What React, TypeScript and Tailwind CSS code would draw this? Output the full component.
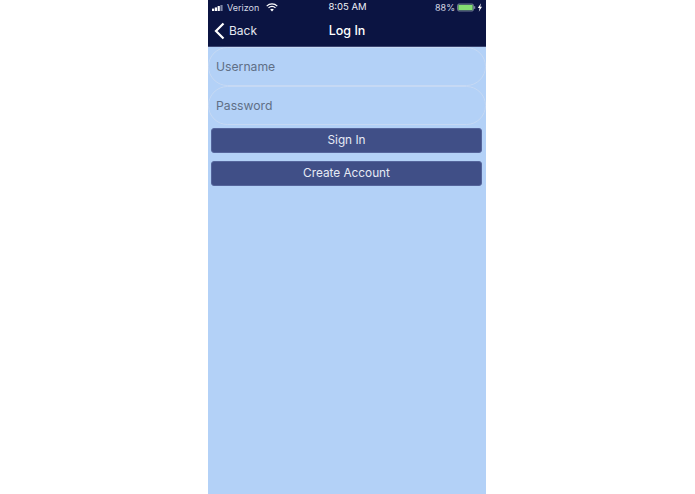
const font = { fontFamily: 'Inter, "Liberation Sans", sans-serif' };

function Field({ label }: { label: string }) {
  return (
    <div className="h-[39px] rounded-[20px] border border-[#c6d9f4] flex items-center pl-[7px] pt-[2px] text-[12.2px] text-[#5f6f86]">
      {label}
    </div>
  );
}

function Btn({ label }: { label: string }) {
  return (
    <div className="ml-[3px] mr-[4px] h-[25px] rounded-[3px] bg-[#404f87] border border-[#55659c] flex items-center justify-center pt-[1px] text-[11.8px] text-[#e6eaf5]">
      {label}
    </div>
  );
}

export default function App() {
  return (
    <div className="w-[695px] h-[494px] bg-white flex justify-center overflow-hidden" style={font}>
      <div className="w-[278px] h-full ml-[-1px] bg-[#b3d1f7] flex flex-col">
        <div className="h-[47px] shrink-0 bg-[#0b1442] text-white flex flex-col border-b border-[#3a4470]">
          <div className="h-[15px] flex items-center justify-between pl-[4px] pr-[3px] text-[9px] text-[#d5d8e4] relative">
            <div className="flex items-center gap-[3px]">
              <svg width="12" height="6" viewBox="0 0 12 6">
                <rect x="0" y="3.6" width="2.2" height="2.4" fill="#fff" />
                <rect x="2.8" y="2.4" width="2.2" height="3.6" fill="#fff" />
                <rect x="5.6" y="1" width="2.2" height="5" fill="#fff" />
                <rect x="8.4" y="0" width="2.2" height="6" fill="#7f86a5" />
              </svg>
              <span>Verizon</span>
              <svg width="12" height="9" viewBox="0 0 12 9" className="ml-[4px]" fill="none" stroke="#fff">
                <path d="M0.7 3.1 A7.6 7.6 0 0 1 11.3 3.1" strokeWidth="1.2" />
                <path d="M2.5 4.9 A5 5 0 0 1 9.5 4.9" strokeWidth="1.2" />
                <path d="M6 8.4 L4.2 6.5 A2.6 2.6 0 0 1 7.8 6.5 Z" fill="#fff" stroke="none" />
              </svg>
            </div>
            <div className="absolute left-[1px] right-0 flex justify-center text-[9.5px] text-[#eef0f6]">8:05 AM</div>
            <div className="flex items-center gap-[2px]">
              <span>88%</span>
              <svg width="26" height="9" viewBox="0 0 26 9">
                <rect x="0.5" y="1" width="16" height="7" rx="1.5" fill="none" stroke="#9aa0b8" strokeWidth="0.7" />
                <rect x="1.3" y="1.8" width="14.4" height="5.4" fill="#84dd72" />
                <rect x="17.2" y="3.2" width="1" height="2.6" fill="#9aa0b8" />
                <path d="M24 0.3 L20.8 5 H22.6 L21.8 8.7 L25 3.8 H23.2 Z" fill="#fff" />
              </svg>
            </div>
          </div>
          <div className="flex-1 relative flex items-center justify-center pt-[1px] text-[12.5px] font-medium">
            <div className="absolute left-[6px] flex items-center gap-[4px] text-[12px] font-normal text-[#e4e7f0]">
              <svg width="11" height="18" viewBox="0 0 11 18" fill="none" stroke="#fff" strokeWidth="2.2">
                <path d="M9.5 1.5 L2 9 L9.5 16.5" />
              </svg>
              <span>Back</span>
            </div>
            <span>Log In</span>
          </div>
        </div>
        <div className="flex flex-col">
          <Field label="Username" />
          <Field label="Password" />
          <div className="h-[3px]" />
          <Btn label="Sign In" />
          <div className="h-[8px]" />
          <Btn label="Create Account" />
        </div>
      </div>
    </div>
  );
}
